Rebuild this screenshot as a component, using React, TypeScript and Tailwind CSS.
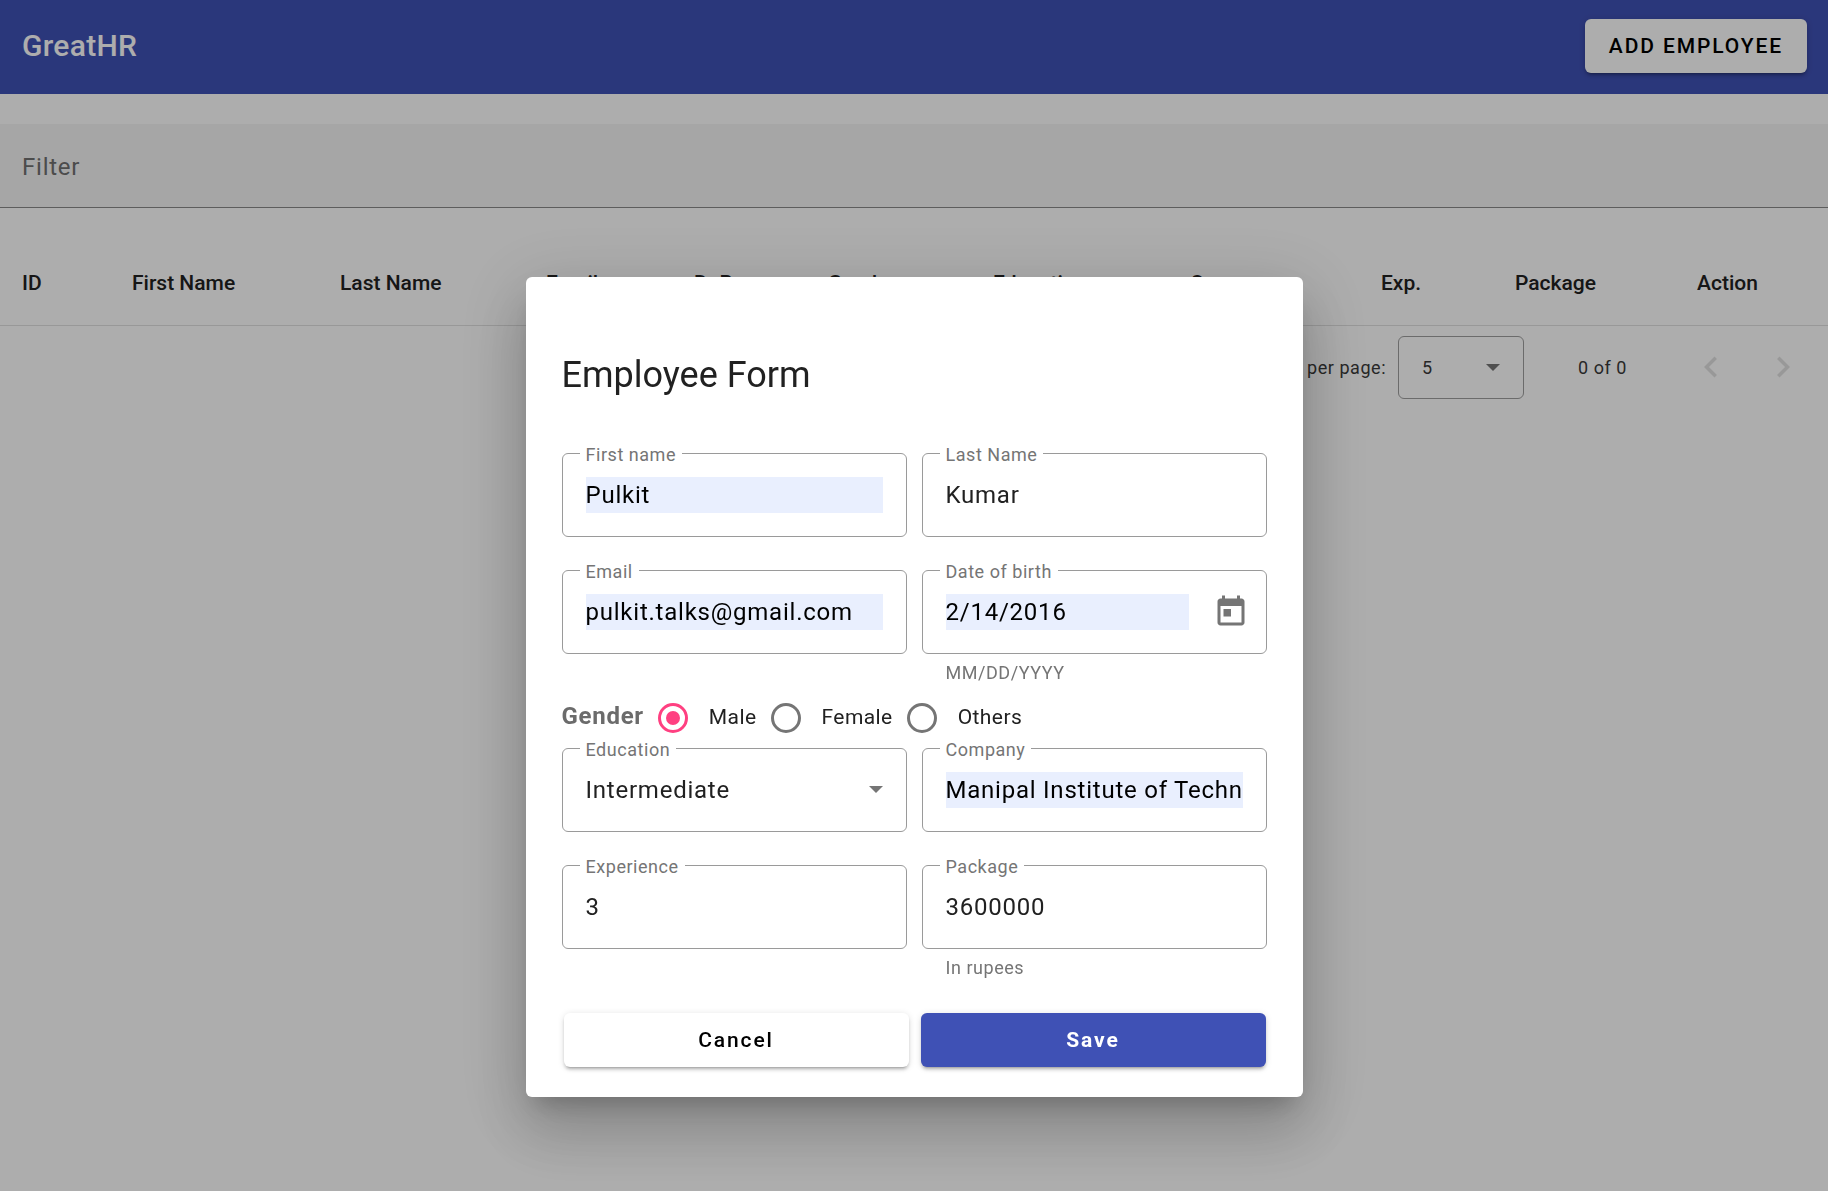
import type { ReactNode } from "react";

const columns = [
  { name: "ID", width: "w-[132px] pl-[22px]" },
  { name: "First Name", width: "w-[208px]" },
  { name: "Last Name", width: "w-[206px]" },
  { name: "Email", width: "w-[148px]" },
  { name: "DoB", width: "w-[134px]" },
  { name: "Gender", width: "w-[165px]" },
  { name: "Education", width: "w-[197px]" },
  { name: "Company", width: "w-[191px]" },
  { name: "Exp.", width: "w-[134px]" },
  { name: "Package", width: "w-[182px]" },
  { name: "Action", width: "w-[131px]" },
];

const raised =
  "shadow-[0_4px_2px_-3px_rgba(0,0,0,0.2),0_3px_3px_0_rgba(0,0,0,0.14),0_1px_7px_0_rgba(0,0,0,0.12)]";

function Caret({ className }: { className: string }) {
  return (
    <svg viewBox="0 0 14 7" className={`pointer-events-none h-[7px] w-[14px] ${className}`} aria-hidden="true">
      <path d="M0 0h14L7 7z" fill="#757575" />
    </svg>
  );
}

function Chevron({ path }: { path: string }) {
  return (
    <svg viewBox="0 0 24 24" className="size-[42px]" aria-hidden="true">
      <path d={path} fill="#000" fillOpacity="0.12" />
    </svg>
  );
}

function Field({ id, label, hint, children }: { id: string; label: string; hint?: string; children: ReactNode }) {
  return (
    <div>
      <div className="relative flex h-[84px] items-center rounded-md border border-[#9a9a9a] px-[23px]">
        <label
          htmlFor={id}
          className="absolute -top-[11px] left-[17px] bg-white px-1.5 text-[18px] leading-6 tracking-[0.03em] text-[#757575]"
        >
          {label}
        </label>
        {children}
      </div>
      {hint && <p className="pt-[7px] pl-6 text-[18px] leading-6 tracking-[0.03em] text-[#757575]">{hint}</p>}
    </div>
  );
}

function TextInput({ id, value, filled }: { id: string; value: string; filled?: boolean }) {
  return (
    <input
      id={id}
      type="text"
      defaultValue={value}
      className={`h-9 w-full min-w-0 text-2xl tracking-[0.032em] outline-none ${
        filled ? "bg-[#e9effe] text-black" : "bg-transparent text-[#212121]"
      }`}
    />
  );
}

function RadioOption({ label, checked }: { label: string; checked?: boolean }) {
  return (
    <label className="flex items-center gap-[21px] text-[21px] tracking-[0.02em] text-[#212121]">
      <input
        type="radio"
        name="gender"
        defaultChecked={checked}
        className="size-[30px] shrink-0 appearance-none rounded-full border-3 border-[#757575] bg-clip-content p-[5px] checked:border-[#ff4081] checked:bg-[#ff4081]"
      />
      {label}
    </label>
  );
}

function EmployeeTable() {
  return (
    <table className="mt-8 w-full table-fixed border-collapse">
      <thead>
        <tr className="h-[85px] border-b border-[#e0e0e0]">
          {columns.map((c) => (
            <th key={c.name} scope="col" className={`pt-0.5 text-left text-[21px] font-medium text-[#212121] ${c.width}`}>
              {c.name}
            </th>
          ))}
        </tr>
      </thead>
    </table>
  );
}

function Paginator() {
  return (
    <div className="flex items-center justify-end pt-2.5 pr-6 text-[18px] tracking-[0.03em] text-[#3a3a3a]">
      <label htmlFor="page-size" className="mr-3">
        Items per page:
      </label>
      <div className="relative flex h-[63px] w-[126px] items-center rounded-md border border-[#9e9e9e]">
        <select id="page-size" defaultValue="5" className="h-full w-full appearance-none bg-transparent pl-[23px] outline-none">
          <option>5</option>
          <option>10</option>
          <option>25</option>
        </select>
        <Caret className="absolute right-[23px]" />
      </div>
      <span className="ml-[54px]">0 of 0</span>
      <button type="button" aria-label="Previous page" disabled className="ml-[63px]">
        <Chevron path="M15.41 7.41L14 6l-6 6 6 6 1.41-1.41L10.83 12z" />
      </button>
      <button type="button" aria-label="Next page" disabled className="ml-[30px]">
        <Chevron path="M10 6L8.59 7.41 13.17 12l-4.58 4.59L10 18l6-6z" />
      </button>
    </div>
  );
}

function EmployeeDialog() {
  return (
    <div
      role="dialog"
      aria-modal="true"
      aria-labelledby="dialog-title"
      className="w-[777px] rounded-md bg-white px-9 pt-[74px] pb-[30px] shadow-[0_16px_22px_-10px_rgba(0,0,0,0.2),0_36px_57px_4px_rgba(0,0,0,0.14),0_14px_69px_12px_rgba(0,0,0,0.12)]"
    >
      <h1 id="dialog-title" className="text-4xl leading-[48px] text-[#212121]">
        Employee Form
      </h1>
      <form className="pt-[54px]">
        <div className="grid grid-cols-2 gap-x-[15px] gap-y-[33px]">
          <Field id="first-name" label="First name">
            <TextInput id="first-name" value="Pulkit" filled />
          </Field>
          <Field id="last-name" label="Last Name">
            <TextInput id="last-name" value="Kumar" />
          </Field>
          <Field id="email" label="Email">
            <TextInput id="email" value="pulkit.talks@gmail.com" filled />
          </Field>
          <Field id="dob" label="Date of birth" hint="MM/DD/YYYY">
            <TextInput id="dob" value="2/14/2016" filled />
            <button type="button" aria-label="Open calendar" className="-mr-1.5 ml-6 shrink-0">
              <svg viewBox="0 0 24 24" className="size-9" fill="#757575" aria-hidden="true">
                <path d="M19 3h-1V1h-2v2H8V1H6v2H5c-1.11 0-1.99.9-1.99 2L3 19c0 1.1.89 2 2 2h14c1.1 0 2-.9 2-2V5c0-1.1-.9-2-2-2zm0 16H5V8h14v11zM7 10h5v5H7z" />
              </svg>
            </button>
          </Field>
        </div>

        <div role="radiogroup" aria-labelledby="gender-label" className="flex items-center gap-3.5 pt-[17px] pb-3.5">
          <span id="gender-label" className="-mt-1 text-2xl leading-8 font-bold tracking-[0.03em] text-[#6b6b6b]">
            Gender
          </span>
          <RadioOption label="Male" checked />
          <RadioOption label="Female" />
          <RadioOption label="Others" />
        </div>

        <div className="grid grid-cols-2 gap-x-[15px] gap-y-[33px]">
          <Field id="education" label="Education">
            <select
              id="education"
              defaultValue="Intermediate"
              className="h-9 w-full appearance-none bg-transparent text-2xl tracking-[0.032em] text-[#212121] outline-none"
            >
              <option>Matric</option>
              <option>Intermediate</option>
              <option>Graduate</option>
            </select>
            <Caret className="absolute right-[23px]" />
          </Field>
          <Field id="company" label="Company">
            <TextInput id="company" value="Manipal Institute of Technology" filled />
          </Field>
          <Field id="experience" label="Experience">
            <TextInput id="experience" value="3" />
          </Field>
          <Field id="package" label="Package" hint="In rupees">
            <TextInput id="package" value="3600000" />
          </Field>
        </div>

        <div className="grid grid-cols-2 gap-3 pt-[33px] pr-px pl-0.5 text-[21px] tracking-[0.09em]">
          <button type="button" className={`h-[54px] rounded-md bg-white pt-0.5 font-medium text-black ${raised}`}>
            Cancel
          </button>
          <button type="submit" className={`h-[54px] rounded-md bg-[#3f51b5] pt-0.5 font-bold text-white ${raised}`}>
            Save
          </button>
        </div>
      </form>
    </div>
  );
}

export default function App() {
  return (
    <div className="min-h-screen bg-white font-['Roboto',sans-serif]">
      <header className="flex h-[94px] items-center justify-between bg-[#3f51b5] pr-[21px] pb-0.5 pl-[22px]">
        <span className="text-3xl font-medium tracking-[0.01em] text-white">GreatHR</span>
        <button
          type="button"
          className={`h-[54px] rounded-md bg-white px-6 pt-0.5 text-[21px] font-medium tracking-[0.09em] text-black ${raised}`}
        >
          ADD EMPLOYEE
        </button>
      </header>

      <main className="pt-[30px]">
        <input
          type="text"
          aria-label="Filter"
          placeholder="Filter"
          className="block h-[84px] w-full border-b border-[#8a8a8a] bg-[#f5f5f5] px-[22px] pt-0.5 text-2xl tracking-[0.032em] outline-none placeholder:text-[#707070]"
        />
        <EmployeeTable />
        <Paginator />
      </main>

      <div className="fixed inset-0 flex items-start justify-center bg-black/32 pt-[277px]">
        <EmployeeDialog />
      </div>
    </div>
  );
}
